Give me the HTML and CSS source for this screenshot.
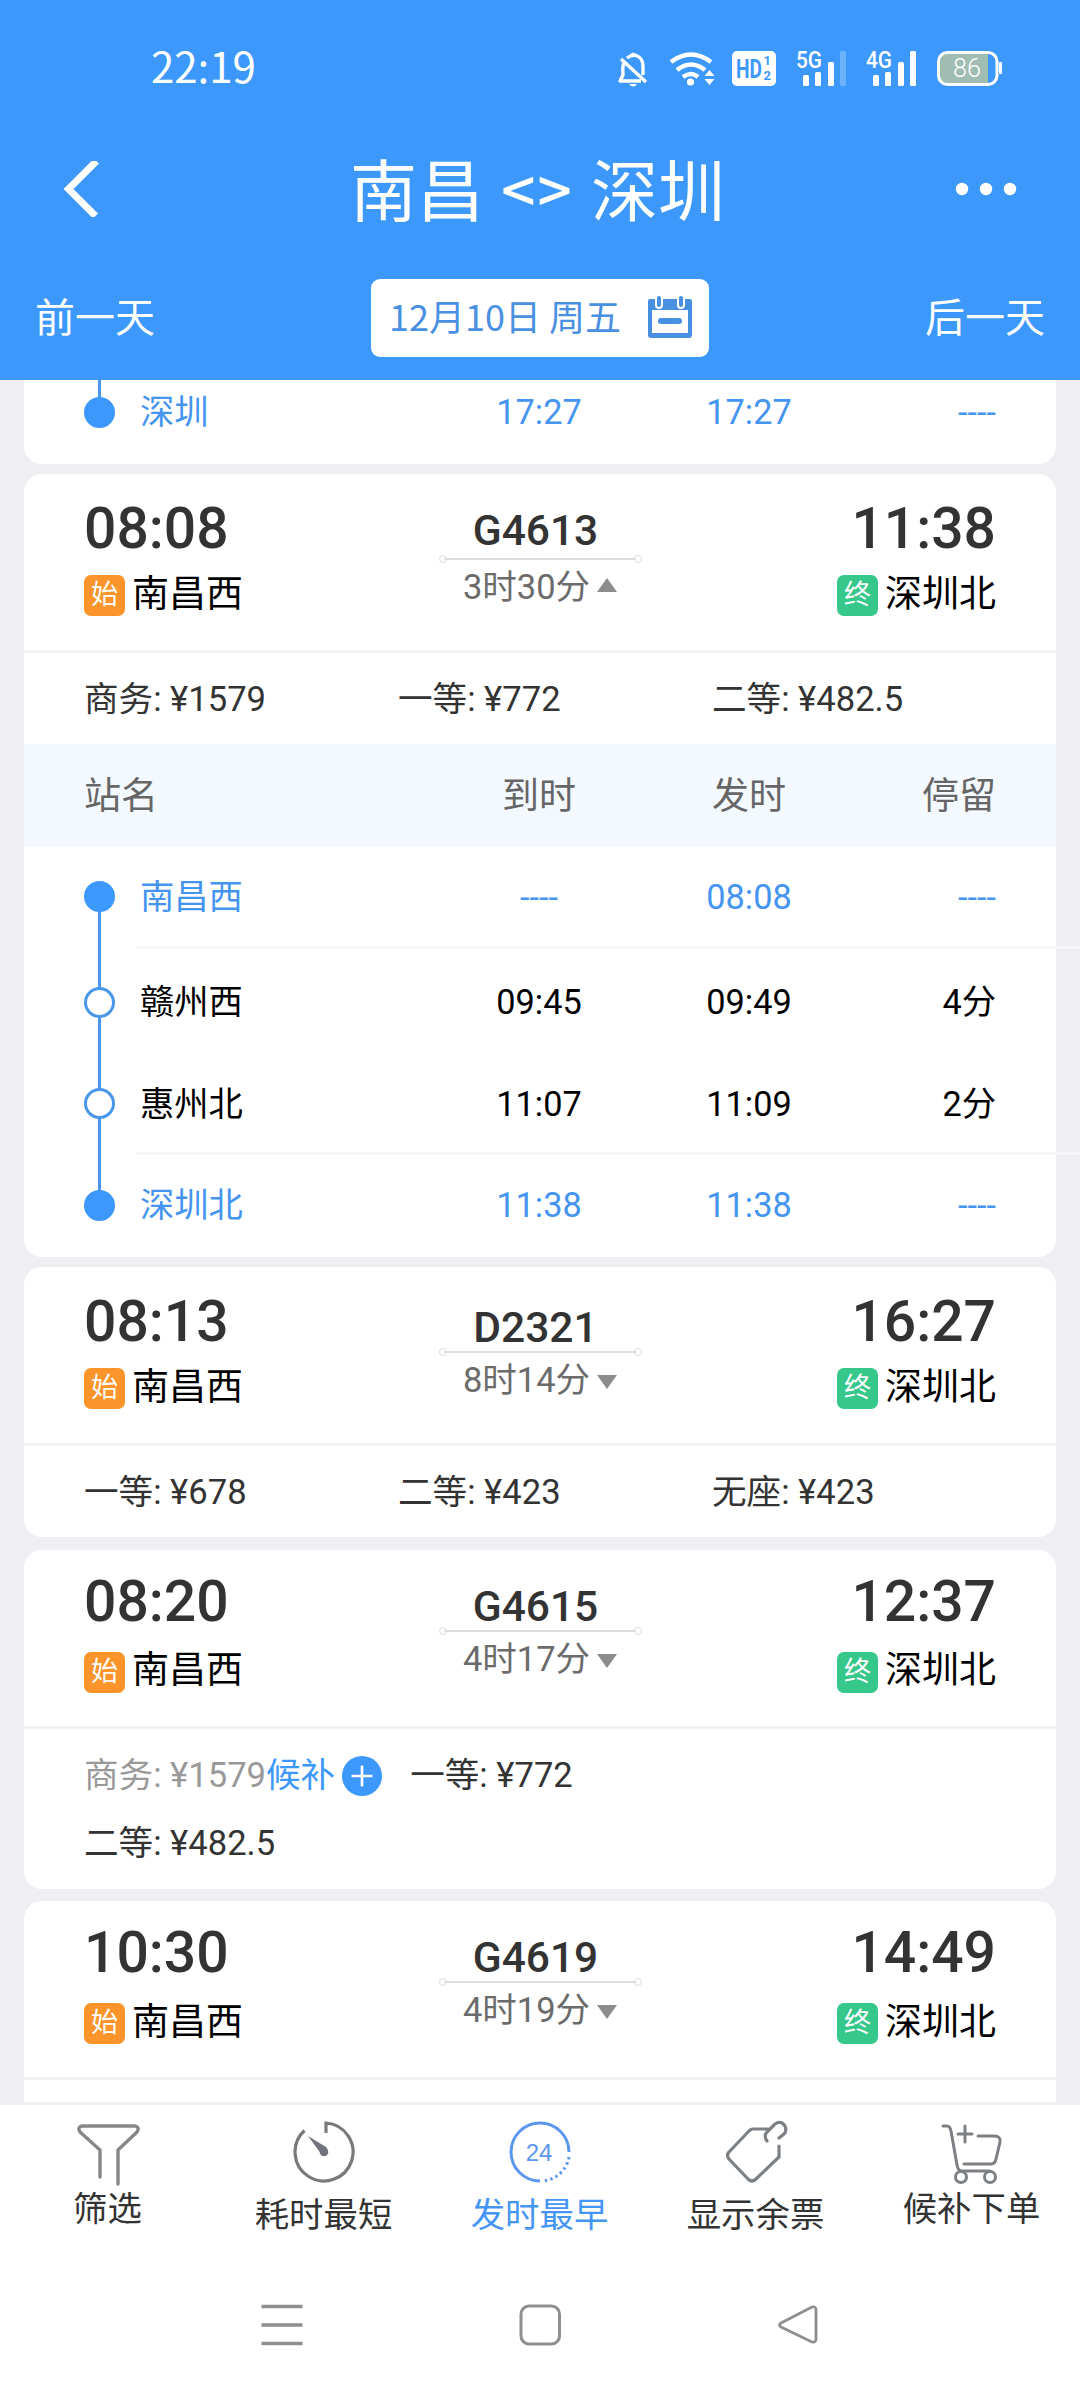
FILE: index.html
```html
<!DOCTYPE html>
<html lang="zh-CN">
<head>
    <meta charset="UTF-8" />
    <title>南昌 - 深圳</title>
    <link rel="stylesheet" href="styles.css">
</head>
<body>
<div class="page">
    <div class="header">
        <div class="status">
            <span class="clock">22:19</span>
            <svg class="status-icons" width="390" height="40" viewBox="616 48 390 40" fill="none">
                <!-- bell off -->
                <g stroke="#fff" stroke-width="3.400" stroke-linejoin="round">
                    <path d="M627 58c8-6 16-1 16 8v9M624 63c-2 4-1 8-1 12l-3 6h21"/>
                    <path d="M621 59l25 23"/>
                </g>
                <path d="M629 56q4-7 8 0zM629 84h8q-4 5-8 0z" fill="#fff"/>
                <!-- wifi -->
                <g stroke="#fff" stroke-width="4.600">
                    <path d="M671 62q20-15 40 0"/>
                    <path d="M677 70q14-11 28 0"/>
                    <path d="M683 77q8-6 15 0"/>
                </g>
                <circle cx="690.500" cy="82" r="3.600" fill="#fff"/>
                <path d="M704.500 76l5-6 5 6zM704.500 79l5 6 5-6z" fill="#fff"/>
                <!-- HD -->
                <rect x="732" y="51" width="44" height="35" rx="5" fill="#fff"/>
                <text class="hd" x="736" y="77.500" textLength="26" lengthAdjust="spacingAndGlyphs">HD</text>
                <text class="hd-num" x="763.500" y="65">1</text>
                <text class="hd-num" x="763.500" y="80">2</text>
                <!-- signals -->
                <text class="net" x="796" y="68" textLength="26" lengthAdjust="spacingAndGlyphs">5G</text>
                <g fill="#fff">
                    <rect x="803" y="75" width="6" height="11" rx="1.500"/>
                    <rect x="815" y="72" width="6" height="14" rx="1.500"/>
                    <rect x="828" y="62" width="6" height="24" rx="1.500"/>
                    <rect x="840" y="51" width="6" height="35" rx="1.500" opacity=".25"/>
                    <rect x="873" y="75" width="6" height="11" rx="1.500"/>
                    <rect x="885" y="72" width="6" height="14" rx="1.500"/>
                    <rect x="898" y="62" width="6" height="24" rx="1.500"/>
                    <rect x="910" y="51" width="6" height="35" rx="1.500"/>
                </g>
                <text class="net" x="866" y="68" textLength="26" lengthAdjust="spacingAndGlyphs">4G</text>
                <!-- battery -->
                <path d="M947 54h41v29h-41a8.500 8.500 0 0 1-8.500-8.500v-12A8.500 8.500 0 0 1 947 54z" fill="#a0bdb3"/>
                <rect x="938.500" y="52.500" width="58.500" height="32" rx="9" stroke="#fff" stroke-width="3"/>
                <rect x="999" y="62" width="3" height="12" rx="1" fill="#fff"/>
                <text class="battery" x="953" y="76.500" textLength="28" lengthAdjust="spacingAndGlyphs">86</text>
            </svg>
        </div>
        <div class="nav">
            <svg width="40" height="56" viewBox="60 160 40 56" fill="none">
                <path d="M96.500 160L68.500 188l27 27" stroke="#fff" stroke-width="7"/>
            </svg>
            <h1>南昌<span class="swap">&lt;&gt;</span>深圳</h1>
            <svg width="62" height="16" viewBox="0 0 62 16" fill="#fff">
                <circle cx="7" cy="8" r="6.200"/><circle cx="31" cy="8" r="6.200"/><circle cx="55" cy="8" r="6.200"/>
            </svg>
        </div>
        <div class="days">
            <span class="day">前一天</span>
            <div class="date">
                <span class="date-text">12月10日 周五</span>
                <svg width="44" height="42" viewBox="0 0 44 42">
                    <path d="M2 3h40q2 0 2 2v34q0 3-3 3H3q-3 0-3-3V5q0-2 2-2z" fill="#4a90e2"/>
                    <path d="M4 14h36v23H4z" fill="#fff"/>
                    <rect x="10" y="22" width="24" height="6" rx="3" fill="#4a90e2"/>
                    <g fill="#4a90e2" stroke="#fff" stroke-width="2">
                        <rect x="8" y="-1" width="6" height="13" rx="3"/>
                        <rect x="30" y="-1" width="6" height="13" rx="3"/>
                    </g>
                </svg>
            </div>
            <span class="day">后一天</span>
        </div>
    </div>

    <div class="list">
        <div class="card card-cut">
            <div class="stop end last">
                <i class="dot"></i><span class="name">深圳</span><span>17:27</span><span>17:27</span><span class="stay">----</span>
            </div>
        </div>

        <div class="card">
            <div class="head">
                <div class="side">
                    <div class="time">08:08</div>
                    <div class="station"><b class="tag from">始</b><span>南昌西</span></div>
                </div>
                <div class="train">
                    <div class="number">G4613</div>
                    <div class="line"></div>
                    <div class="cost">3时30分<i class="arrow up"></i></div>
                </div>
                <div class="side right">
                    <div class="time">11:38</div>
                    <div class="station"><b class="tag to">终</b><span>深圳北</span></div>
                </div>
            </div>
            <div class="prices">
                <span>商务: ¥1579</span><span>一等: ¥772</span><span>二等: ¥482.5</span>
            </div>
            <div class="stops-head">
                <span>站名</span><span>到时</span><span>发时</span><span class="stay">停留</span>
            </div>
            <div class="stops">
                <div class="stop end first">
                    <i class="dot"></i><span class="name">南昌西</span><span>----</span><span>08:08</span><span class="stay">----</span>
                </div>
                <div class="rule"></div>
                <div class="stop">
                    <i class="dot"></i><span class="name">赣州西</span><span>09:45</span><span>09:49</span><span class="stay">4分</span>
                </div>
                <div class="stop short-row">
                    <i class="dot"></i><span class="name">惠州北</span><span>11:07</span><span>11:09</span><span class="stay">2分</span>
                </div>
                <div class="rule"></div>
                <div class="stop end last">
                    <i class="dot"></i><span class="name">深圳北</span><span>11:38</span><span>11:38</span><span class="stay">----</span>
                </div>
            </div>
        </div>

        <div class="card">
            <div class="head low">
                <div class="side">
                    <div class="time">08:13</div>
                    <div class="station"><b class="tag from">始</b><span>南昌西</span></div>
                </div>
                <div class="train">
                    <div class="number">D2321</div>
                    <div class="line"></div>
                    <div class="cost">8时14分<i class="arrow"></i></div>
                </div>
                <div class="side right">
                    <div class="time">16:27</div>
                    <div class="station"><b class="tag to">终</b><span>深圳北</span></div>
                </div>
            </div>
            <div class="prices">
                <span>一等: ¥678</span><span>二等: ¥423</span><span>无座: ¥423</span>
            </div>
        </div>

        <div class="card gap">
            <div class="head high">
                <div class="side">
                    <div class="time">08:20</div>
                    <div class="station"><b class="tag from">始</b><span>南昌西</span></div>
                </div>
                <div class="train">
                    <div class="number">G4615</div>
                    <div class="line"></div>
                    <div class="cost">4时17分<i class="arrow"></i></div>
                </div>
                <div class="side right">
                    <div class="time">12:37</div>
                    <div class="station"><b class="tag to">终</b><span>深圳北</span></div>
                </div>
            </div>
            <div class="prices wait">
                <div class="price-row">
                    <span class="sold">商务: ¥1579</span><span class="backup">候补</span>
                    <svg class="plus" width="40" height="40" viewBox="0 0 40 40">
                        <circle cx="20" cy="20" r="20" fill="#3d98fc"/>
                        <path d="M9.500 20h21M20 9.500v21" stroke="#fff" stroke-width="2.600"/>
                    </svg>
                    <span>一等: ¥772</span>
                </div>
                <div class="price-row">二等: ¥482.5</div>
            </div>
        </div>

        <div class="card gap">
            <div class="head high">
                <div class="side">
                    <div class="time">10:30</div>
                    <div class="station"><b class="tag from">始</b><span>南昌西</span></div>
                </div>
                <div class="train">
                    <div class="number">G4619</div>
                    <div class="line"></div>
                    <div class="cost">4时19分<i class="arrow"></i></div>
                </div>
                <div class="side right">
                    <div class="time">14:49</div>
                    <div class="station"><b class="tag to">终</b><span>深圳北</span></div>
                </div>
            </div>
            <div class="prices"></div>
        </div>
    </div>

    <div class="tabs">
        <div class="tab short">
            <svg width="64" height="66" viewBox="76 2120 64 66" fill="none" stroke="#85888a" stroke-width="3.400" stroke-linecap="round" stroke-linejoin="round">
                <path d="M100 2177v-27l-20-18q-3-5 2-6h53q5 1 2 6l-19 18v34"/>
            </svg>
            <span>筛选</span>
        </div>
        <div class="tab">
            <svg width="64" height="66" viewBox="292 2120 64 66" fill="none" stroke="#777a7c" stroke-width="3.200">
                <path d="M326 2133V2123A29 29 0 1 1 304.500 2130.500"/>
                <path d="M308 2136l12.500 17a4 4 0 1 0 5.500-6z" fill="#70737c" stroke="none"/>
                <circle cx="324" cy="2152" r="4.300" fill="#70737c" stroke="none"/>
            </svg>
            <span>耗时最短</span>
        </div>
        <div class="tab active">
            <svg width="64" height="66" viewBox="508 2120 64 66" fill="none" stroke="#5d96ee" stroke-width="3">
                <path d="M569 2152a29 29 0 1 0-29 29"/>
                <path d="M569 2157a29 29 0 0 1-26 24" stroke-dasharray="2.400 3.200"/>
                <text class="num24" x="539" y="2161" text-anchor="middle">24</text>
            </svg>
            <span>发时最早</span>
        </div>
        <div class="tab">
            <svg width="64" height="66" viewBox="724 2120 64 66" fill="none" stroke="#7c8084" stroke-width="3.200" stroke-linecap="round">
                <path d="M768 2129h-15q-2 0-4 2l-20 21q-3 3 0 7l19 20q4 4 8 0l23-22v-11"/>
                <path d="M767 2141q-4-6 1-10l7-7q6-4 10 2 2 5-1 8l-5 4"/>
            </svg>
            <span>显示余票</span>
        </div>
        <div class="tab short">
            <svg width="64" height="66" viewBox="940 2120 64 66" fill="none" stroke="#7c8084" stroke-width="3" stroke-linecap="round">
                <path d="M943 2126h4q3 0 4 5l6 34q1 6 5 6h28"/>
                <path d="M978 2136h16q7 0 6 6l-4 17q-1 5-5 5h-27M965 2126v16M958 2134h14"/>
                <circle cx="961" cy="2177" r="5.500"/><circle cx="990" cy="2177" r="5.500"/>
            </svg>
            <span>候补下单</span>
        </div>
    </div>

    <div class="sysbar">
        <svg width="44" height="44" viewBox="0 0 44 44" fill="none" stroke="#8f8f8f" stroke-width="3.400">
            <path d="M1.500 3.500h41M1.500 22h41M1.500 40.500h41"/>
        </svg>
        <svg width="44" height="44" viewBox="0 0 44 44" fill="none" stroke="#8f8f8f" stroke-width="3">
            <rect x="3" y="3" width="38.500" height="38" rx="8"/>
        </svg>
        <svg width="44" height="44" viewBox="0 0 44 44" fill="none" stroke="#8f8f8f" stroke-width="2.800" stroke-linejoin="round">
            <path d="M5 20L36 4q4-1 4 3v29q0 4-4 3L5 24q-3-2 0-4z"/>
        </svg>
    </div>
</div>
</body>
</html>
```
FILE: styles.css
```css
*{
    margin: 0;
    padding: 0;
    box-sizing: border-box;
}
body{
    width: 1080px;
    height: 2400px;
    overflow: hidden;
    background-color: #eeeef3;
    font-family: Roboto, "Noto Sans CJK SC", sans-serif;
    color: #333;
}
i, b{
    font-style: normal;
    font-weight: normal;
}
svg{
    display: block;
    flex: none;
}
.page{
    display: flex;
    flex-direction: column;
    height: 2400px;
}

/* header */
.header{
    flex: none;
    height: 380px;
    background-color: #3d98fc;
    color: #fff;
    font-family: "Noto Sans CJK SC", sans-serif;
}
.status{
    display: flex;
    justify-content: space-between;
    padding: 48px 74px 0 151px;
    height: 130px;
}
.clock{
    margin-top: -3px;
    font-size: 42px;
    line-height: 40px;
}
.hd{
    font: bold 26px Roboto, sans-serif;
    fill: #3d98fc;
}
.hd-num{
    font: bold 13px Roboto, sans-serif;
    fill: #3d98fc;
}
.net{
    font: 500 23px Roboto, sans-serif;
    fill: #fff;
}
.battery{
    font: 300 25px Roboto, sans-serif;
    fill: #fff;
}
.nav{
    display: flex;
    align-items: center;
    justify-content: space-between;
    height: 117px;
    padding: 0 63px 0 60px;
}
.nav h1{
    display: flex;
    margin-left: 20px;
    padding-bottom: 4px;
    font-size: 67px;
    line-height: 96px;
    font-weight: 400;
}
.swap{
    width: 107px;
    text-align: center;
    font-size: 60px;
    letter-spacing: 2px;
    font-weight: 500;
}
.days{
    display: flex;
    align-items: center;
    justify-content: space-between;
    height: 142px;
    padding: 0 35px;
}
.day{
    padding-bottom: 7px;
    font-size: 40px;
    line-height: 60px;
}
.date{
    display: flex;
    align-items: center;
    justify-content: space-between;
    width: 338px;
    height: 78px;
    padding: 0 17px 0 18px;
    border-radius: 9px;
    background-color: #fff;
    color: #4a90e2;
}
.date svg{
    margin-top: -3px;
}
.date-text{
    padding-bottom: 6px;
    font-size: 36px;
    line-height: 70px;
}

/* train list */
.list{
    flex: none;
    display: flex;
    flex-direction: column;
    gap: 10px;
    height: 1722px;
    padding: 0 24px;
    overflow: hidden;
}
.card{
    flex: none;
    border-radius: 18px;
    background-color: #fff;
}
.card-cut{
    height: 84px;
    border-radius: 0 0 18px 18px;
}
.gap{
    margin-top: 2.5px;
}
.head{
    display: flex;
    justify-content: space-between;
    height: 179px;
    padding: 20px 60px 0;
    border-bottom: 3px solid #f2f2f3;
}
.side{
    width: 200px;
}
.time{
    font-size: 57px;
    line-height: 70px;
    font-weight: 500;
}
.station{
    display: flex;
    align-items: center;
    gap: 7px;
    height: 41px;
    margin-top: 11px;
    color: #000;
    font-size: 37px;
    line-height: 41px;
}
.station span{
    margin-top: -3px;
}
.tag{
    width: 41px;
    border-radius: 7px;
    color: #fff;
    font-size: 27px;
    text-align: center;
}
.from{
    background-color: #fb942a;
}
.to{
    background-color: #36c78a;
}
.right .time{
    text-align: right;
}
.right .station{
    justify-content: flex-end;
}
.train{
    display: flex;
    flex-direction: column;
    align-items: center;
    width: 201px;
    padding-top: 15px;
}
.number{
    margin-right: 9px;
    font-size: 42.5px;
    line-height: 44px;
    font-weight: 500;
}
.line{
    display: flex;
    align-items: center;
    justify-content: space-between;
    width: 203px;
    height: 6px;
    margin-top: 3px;
    background: linear-gradient(#ddd, #ddd) center / 192px 2px no-repeat;
}
.line::before, .line::after{
    content: "";
    width: 6px;
    height: 6px;
    border: 1.5px solid #ddd;
    border-radius: 50%;
}
.cost{
    display: flex;
    align-items: center;
    gap: 7px;
    margin-top: 4px;
    color: #6b6b6b;
    font-size: 34.5px;
    line-height: 42px;
}
.arrow{
    border: 10px solid transparent;
    border-top: 14px solid #8c8c8c;
    border-bottom: 0;
    margin-top: 4px;
}
.arrow.up{
    border-top: 0;
    border-bottom: 14px solid #8c8c8c;
    margin-top: -4px;
}
.low .train{
    padding-top: 19px;
}
.low .line{
    margin-top: -1px;
}
.high{
    padding-top: 17px;
}
.high .station{
    margin-top: 15px;
}
.high .number{
    margin-top: 3px;
}
.high .line{
    margin-top: -1px;
}
.prices{
    display: grid;
    grid-template-columns: 314px 314px auto;
    height: 91px;
    padding: 1px 60px 0;
    font-size: 34.6px;
    line-height: 91px;
}
.wait{
    display: block;
    height: 160px;
    padding-top: 12px;
    line-height: 68px;
}
.price-row{
    display: flex;
    align-items: center;
}
.sold{
    color: #999;
}
.backup{
    color: #3d98fc;
}
.plus{
    margin: 2px 28px 0 7px;
}

/* stop table */
.stops-head{
    display: grid;
    grid-template-columns: 350px 210px 210px 142px;
    height: 103px;
    padding: 1px 60px 0;
    background-color: #f4f9ff;
    color: #666;
    font-size: 37px;
    line-height: 103px;
}
.stops-head span:nth-child(2), .stops-head span:nth-child(3){
    text-align: center;
}
.stop{
    display: grid;
    grid-template-columns: 56px 294px 210px 210px 142px;
    align-items: center;
    position: relative;
    height: 106px;
    padding: 0 60px;
    color: #000;
    font-size: 34.3px;
    line-height: 40px;
    text-align: center;
}
.stop .name{
    text-align: left;
}
.stop .stay, .stops-head .stay{
    text-align: right;
}
.stop.end{
    color: #4595f0;
}
.dot{
    position: relative;
    width: 31px;
    height: 31px;
    border: 3px solid #4a96e8;
    border-radius: 50%;
    background-color: #fff;
}
.end .dot{
    border-color: #3d98fc;
    background-color: #3d98fc;
}
.stop::before{
    content: "";
    position: absolute;
    left: 74px;
    top: 0;
    width: 3px;
    height: 100%;
    background-color: #4a96e8;
}
.stop.first::before{
    top: 50%;
    height: 57px;
}
.stop.last::before{
    top: -3px;
    height: 50%;
}
.stops{
    height: 410px;
}
.stops .first{
    height: 99px;
}
.stops .short-row{
    height: 97px;
}
.stops .last{
    height: 100px;
}
.card-cut .stop{
    height: 64px;
}
.rule{
    width: 944px;
    height: 3px;
    margin-left: 112px;
    background-color: #f7f7f8;
}

/* bottom */
.tabs{
    flex: none;
    display: grid;
    grid-template-columns: repeat(5, 1fr);
    height: 151px;
    border-top: 3px solid #f0f0f1;
    background-color: #fff;
}
.tab{
    display: flex;
    flex-direction: column;
    align-items: center;
    padding-top: 15px;
    font-size: 34.4px;
    line-height: 40px;
}
.tab span{
    margin: 9px 1px 0 0;
}
.tab.short span{
    margin-top: 3px;
}
.active{
    color: #4595f5;
}
.num24{
    font: 24px "Liberation Sans", sans-serif;
    fill: #5d96ee;
    stroke: none;
}
.sysbar{
    flex: 1;
    display: flex;
    justify-content: center;
    gap: 214px;
    padding-top: 50px;
    background-color: #fff;
}
```
